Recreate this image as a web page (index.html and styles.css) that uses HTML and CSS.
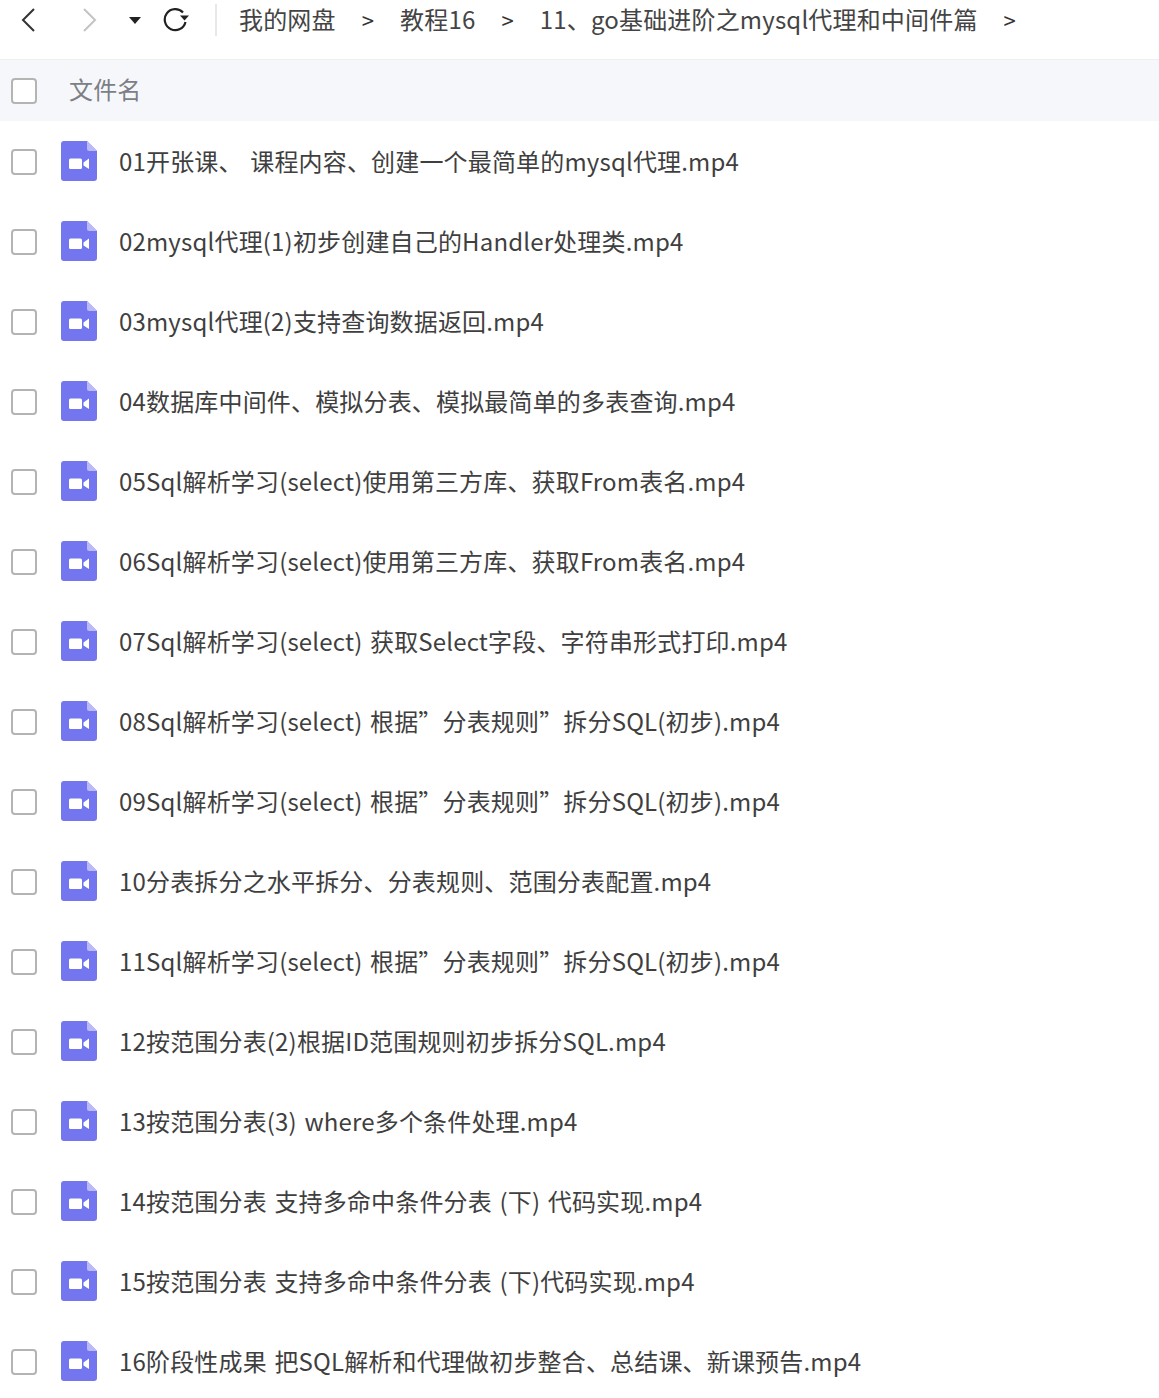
FILE: index.html
```html
<!DOCTYPE html>
<html lang="zh-CN">
<head>
<meta charset="UTF-8">
<title>文件列表</title>
<link rel="stylesheet" href="styles.css">
</head>
<body>
<svg class="sprite" width="0" height="0">
  <symbol id="video" viewBox="0 0 36 40">
    <path d="M3 0H26L36 10V37a3 3 0 0 1-3 3H3a3 3 0 0 1-3-3V3a3 3 0 0 1 3-3Z" fill="#7376ee"/>
    <path d="M26 0L36 10H28a2 2 0 0 1-2-2Z" fill="#b9baf7"/>
    <rect x="8" y="17.5" width="13" height="10.5" rx="1.5" fill="#fff"/>
    <path d="M22.5 21.5L28 17.5V28L22.5 24.5Z" fill="#fff"/>
  </symbol>
</svg>

<div class="toolbar">
  <svg class="nav-icon back" width="16" height="26" viewBox="0 0 16 26"><path d="M14 2L3 13L14 24" fill="none" stroke="#333" stroke-width="2"/></svg>
  <svg class="nav-icon forward" width="16" height="26" viewBox="0 0 16 26"><path d="M2 2L13 13L2 24" fill="none" stroke="#c4c4c4" stroke-width="2"/></svg>
  <span class="caret"></span>
  <svg class="nav-icon refresh" width="28" height="26" viewBox="0 0 28 26"><path d="M20 5.5A10.5 10.5 0 1 0 22.5 15" fill="none" stroke="#222" stroke-width="2.2"/><path d="M17 8.5H26L21.5 13.5Z" fill="#222"/></svg>
  <span class="divider"></span>
  <nav class="crumbs">
    <span class="crumb">我的网盘</span><span class="sep">&gt;</span>
    <span class="crumb">教程16</span><span class="sep">&gt;</span>
    <span class="crumb">11、go基础进阶之mysql代理和中间件篇</span><span class="sep">&gt;</span>
  </nav>
</div>

<div class="list-head">
  <span class="check"></span>
  <span class="head-name">文件名</span>
</div>

<ul class="files">
  <li class="file"><span class="check"></span><svg class="file-icon"><use href="#video"/></svg><span class="name">01开张课、 课程内容、创建一个最简单的mysql代理.mp4</span></li>
  <li class="file"><span class="check"></span><svg class="file-icon"><use href="#video"/></svg><span class="name">02mysql代理(1)初步创建自己的Handler处理类.mp4</span></li>
  <li class="file"><span class="check"></span><svg class="file-icon"><use href="#video"/></svg><span class="name">03mysql代理(2)支持查询数据返回.mp4</span></li>
  <li class="file"><span class="check"></span><svg class="file-icon"><use href="#video"/></svg><span class="name">04数据库中间件、模拟分表、模拟最简单的多表查询.mp4</span></li>
  <li class="file"><span class="check"></span><svg class="file-icon"><use href="#video"/></svg><span class="name">05Sql解析学习(select)使用第三方库、获取From表名.mp4</span></li>
  <li class="file"><span class="check"></span><svg class="file-icon"><use href="#video"/></svg><span class="name">06Sql解析学习(select)使用第三方库、获取From表名.mp4</span></li>
  <li class="file"><span class="check"></span><svg class="file-icon"><use href="#video"/></svg><span class="name">07Sql解析学习(select) 获取Select字段、字符串形式打印.mp4</span></li>
  <li class="file"><span class="check"></span><svg class="file-icon"><use href="#video"/></svg><span class="name">08Sql解析学习(select) 根据”分表规则”拆分SQL(初步).mp4</span></li>
  <li class="file"><span class="check"></span><svg class="file-icon"><use href="#video"/></svg><span class="name">09Sql解析学习(select) 根据”分表规则”拆分SQL(初步).mp4</span></li>
  <li class="file"><span class="check"></span><svg class="file-icon"><use href="#video"/></svg><span class="name">10分表拆分之水平拆分、分表规则、范围分表配置.mp4</span></li>
  <li class="file"><span class="check"></span><svg class="file-icon"><use href="#video"/></svg><span class="name">11Sql解析学习(select) 根据”分表规则”拆分SQL(初步).mp4</span></li>
  <li class="file"><span class="check"></span><svg class="file-icon"><use href="#video"/></svg><span class="name">12按范围分表(2)根据ID范围规则初步拆分SQL.mp4</span></li>
  <li class="file"><span class="check"></span><svg class="file-icon"><use href="#video"/></svg><span class="name">13按范围分表(3) where多个条件处理.mp4</span></li>
  <li class="file"><span class="check"></span><svg class="file-icon"><use href="#video"/></svg><span class="name">14按范围分表 支持多命中条件分表 (下) 代码实现.mp4</span></li>
  <li class="file"><span class="check"></span><svg class="file-icon"><use href="#video"/></svg><span class="name">15按范围分表 支持多命中条件分表 (下)代码实现.mp4</span></li>
  <li class="file"><span class="check"></span><svg class="file-icon"><use href="#video"/></svg><span class="name">16阶段性成果 把SQL解析和代理做初步整合、总结课、新课预告.mp4</span></li>
</ul>
</body>
</html>
```
FILE: styles.css
```css
html {
  height: 1398px;
  overflow: hidden;
}
body {
  margin: 0;
  height: 1398px;
  overflow: hidden;
  background: #fff;
  color: #3f3f3f;
  font-family: "Noto Sans CJK SC", "Noto Sans", sans-serif;
  font-size: 24px;
  letter-spacing: 0.17px;
  word-spacing: 2px;
}
.sprite {
  position: absolute;
}
.toolbar {
  display: flex;
  align-items: center;
  box-sizing: border-box;
  height: 60px;
  padding: 0 0 19px 20px;
  border-bottom: 1px solid #eeeeee;
}
.nav-icon {
  flex: none;
}
.forward {
  margin-left: 46px;
}
.caret {
  width: 0;
  height: 0;
  margin-left: 31px;
  border-left: 6px solid transparent;
  border-right: 6px solid transparent;
  border-top: 7px solid #222;
}
.refresh {
  margin-left: 22px;
}
.divider {
  width: 2px;
  height: 32px;
  margin-left: 24px;
  background: #e8e8e8;
}
.crumbs {
  display: flex;
  align-items: center;
  margin-left: 22px;
  padding-bottom: 4px;
  color: #444;
}
.crumb {
  white-space: nowrap;
}
.sep {
  margin: 0 26px;
  padding-top: 2px;
  font-size: 22px;
  color: #333;
}
.list-head {
  display: flex;
  align-items: center;
  height: 61px;
  padding-left: 11px;
  background: #f6f7fa;
}
.head-name {
  margin-left: 32px;
  padding-bottom: 4px;
  color: #7c7f86;
}
.check {
  flex: none;
  box-sizing: border-box;
  width: 26px;
  height: 26px;
  border: 2px solid #b4b4b4;
  border-radius: 4px;
  background: #fff;
}
.files {
  margin: 0;
  padding: 0;
  list-style: none;
}
.file {
  display: flex;
  align-items: center;
  height: 80px;
  padding-left: 11px;
}
.file .check {
  margin-top: 2px;
}
.file-icon {
  flex: none;
  width: 36px;
  height: 40px;
  margin-left: 24px;
}
.name {
  margin-left: 22px;
  padding-bottom: 2px;
  white-space: nowrap;
}
```
